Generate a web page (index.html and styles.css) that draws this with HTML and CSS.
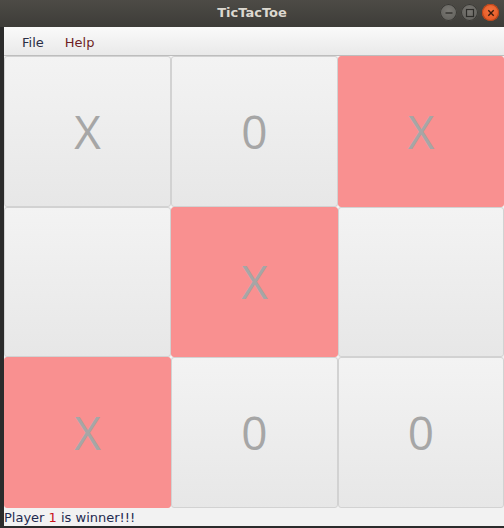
FILE: index.html
```html
<!DOCTYPE html>
<html>
<head>
<meta charset="utf-8">
<link rel="stylesheet" href="styles.css">
</head>
<body>
<div class="window">
  <div class="titlebar">
    <span class="title">TicTacToe</span>
    <div class="controls">
      <span class="wbtn"><svg width="16" height="16" viewBox="0 0 16 16"><line x1="4.5" y1="8" x2="11.5" y2="8" stroke="#2d2c29" stroke-width="1.3"/></svg></span>
      <span class="wbtn"><svg width="16" height="16" viewBox="0 0 16 16"><rect x="4.5" y="4.5" width="7" height="7" fill="none" stroke="#2d2c29" stroke-width="1.2"/></svg></span>
      <span class="wbtn close"><svg width="16" height="16" viewBox="0 0 16 16"><path d="M5.3 5.3 L10.7 10.7 M10.7 5.3 L5.3 10.7" stroke="#3a1a0c" stroke-width="1.4"/></svg></span>
    </div>
  </div>
  <div class="frame">
    <div class="content">
      <div class="menubar">
        <span class="menu">File</span>
        <span class="menu help">Help</span>
      </div>
      <div class="board">
        <div class="cell">X</div>
        <div class="cell">0</div>
        <div class="cell win">X</div>
        <div class="cell"></div>
        <div class="cell win">X</div>
        <div class="cell"></div>
        <div class="cell win">X</div>
        <div class="cell">0</div>
        <div class="cell">0</div>
      </div>
      <div class="status">Player <span class="num">1</span> is winner!!!</div>
    </div>
  </div>
</div>
</body>
</html>
```
FILE: styles.css
```css
html, body {
  margin: 0;
  padding: 0;
  background: #2b2b2b;
}
.window {
  width: 504px;
  height: 528px;
  display: flex;
  flex-direction: column;
  overflow: hidden;
}
.titlebar {
  height: 27px;
  flex: 0 0 27px;
  background: linear-gradient(#4d4b46, #3d3c38);
  position: relative;
  display: flex;
  align-items: center;
  justify-content: center;
}
.title {
  font-family: "DejaVu Sans", sans-serif;
  font-weight: bold;
  font-size: 13px;
  color: #dcd8cf;
  margin-top: -2px;
}
.controls {
  position: absolute;
  right: 5px;
  top: 4px;
  display: flex;
  gap: 4px;
}
.wbtn {
  width: 17px;
  height: 17px;
  border-radius: 50%;
  background: radial-gradient(circle at 50% 40%, #7a7873, #5c5b57);
  box-shadow: inset 0 0 0 1px #3a3935;
  display: flex;
  align-items: center;
  justify-content: center;
}
.wbtn.close {
  background: radial-gradient(circle at 50% 40%, #f3733f, #e0511c);
  box-shadow: inset 0 0 0 1px #b8441a;
}
.frame {
  flex: 1;
  display: flex;
  padding-left: 4px;
  padding-bottom: 2px;
}
.content {
  flex: 1;
  background: #f2f2f2;
  display: flex;
  flex-direction: column;
}
.menubar {
  box-sizing: border-box;
  height: 29px;
  flex: 0 0 29px;
  background: linear-gradient(#fafafa, #e9e9e9);
  border-bottom: 1px solid #bdbdbd;
  display: flex;
  align-items: center;
  padding-left: 18px;
  gap: 21px;
}
.menu {
  font-family: "DejaVu Sans", sans-serif;
  font-size: 13px;
  color: #2a2f45;
  margin-top: 2px;
}
.menu.help {
  color: #6e1f24;
}
.board {
  display: grid;
  grid-template-columns: 167px 167px 166px;
  grid-template-rows: 151px 150px 151px;
}
.cell {
  box-sizing: border-box;
  border: 1px solid #d2d2d2;
  border-radius: 3px;
  background: linear-gradient(#f3f3f3, #e7e7e7);
  display: flex;
  align-items: center;
  justify-content: center;
  font-family: "Open Sans", sans-serif;
  font-size: 46px;
  color: #a6a6a6;
  padding-bottom: 2px;
}
.cell.win {
  background: #f99090;
  border-color: #f99090;
}
.status {
  flex: 1;
  font-family: "DejaVu Sans", sans-serif;
  font-size: 13px;
  color: #1e2a50;
  line-height: 17px;
  padding-top: 1px;
}
.num {
  color: #c8141a;
}
```
